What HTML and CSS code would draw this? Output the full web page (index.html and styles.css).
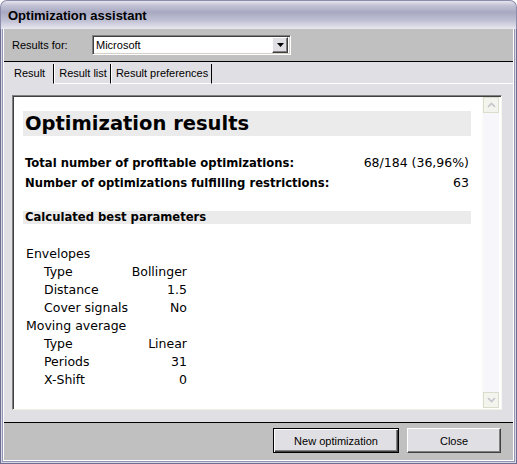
FILE: index.html
```html
<!DOCTYPE html>
<html>
<head>
<meta charset="utf-8">
<link rel="stylesheet" href="styles.css">
</head>
<body>
<div class="window">
  <div class="titlebar"><span class="title">Optimization assistant</span></div>
  <div class="frame">
    <div class="header">
      <span class="label">Results for:</span>
      <div class="combo">
        <span class="combo-text">Microsoft</span>
        <span class="combo-btn"><svg width="7" height="4" viewBox="0 0 7 4"><path d="M0 0h7L3.5 4z" fill="#000"/></svg></span>
      </div>
    </div>
    <div class="tabarea">
      <div class="tabs">
        <div class="tab active">Result</div>
        <div class="tab">Result list</div>
        <div class="tab">Result preferences</div>
        <div class="tabfill"></div>
      </div>
      <div class="panel">
        <div class="view">
          <div class="content">
            <div class="h1">Optimization results</div>
            <div class="stats">
              <div class="stat"><span>Total number of profitable optimizations:</span><span class="val">68/184 (36,96%)</span></div>
              <div class="stat"><span>Number of optimizations fulfilling restrictions:</span><span class="val">63</span></div>
            </div>
            <div class="h2">Calculated best parameters</div>
            <div class="params">
              <div class="group">Envelopes</div>
              <div class="prm"><span>Type</span><span>Bollinger</span></div>
              <div class="prm"><span>Distance</span><span>1.5</span></div>
              <div class="prm"><span>Cover signals</span><span>No</span></div>
              <div class="group">Moving average</div>
              <div class="prm"><span>Type</span><span>Linear</span></div>
              <div class="prm"><span>Periods</span><span>31</span></div>
              <div class="prm"><span>X-Shift</span><span>0</span></div>
            </div>
          </div>
          <div class="scrollbar">
            <div class="sbtn"><svg width="9" height="6" viewBox="0 0 9 6"><path d="M1 5L4.5 1.5L8 5" fill="none" stroke="#c4c4cc" stroke-width="1.6"/></svg></div>
            <div class="track"></div>
            <div class="sbtn"><svg width="9" height="6" viewBox="0 0 9 6"><path d="M1 1L4.5 4.5L8 1" fill="none" stroke="#c4c4cc" stroke-width="1.6"/></svg></div>
          </div>
        </div>
      </div>
    </div>
    <div class="footer">
      <button class="btn default">New optimization</button>
      <button class="btn close">Close</button>
    </div>
  </div>
</div>
</body>
</html>
```
FILE: styles.css
```css
html, body { margin: 0; padding: 0; background: #fff; }
.window { width: 517px; height: 464px; display: flex; flex-direction: column; font-family: "Liberation Sans", Arial, sans-serif; font-size: 11px; color: #000; }
.titlebar { height: 29px; flex: none; box-sizing: border-box; border-radius: 7px 7px 0 0; border: 1px solid #8c8cac; border-bottom: none; background: linear-gradient(#e6e6ee 0%, #c4c4d6 15%, #a8a8c2 40%, #c0c0d4 70%, #e8e8f0 100%); display: flex; align-items: center; padding-left: 7px; }
.title { font-weight: bold; font-size: 13px; color: #000; }
.frame { flex: 1; display: flex; flex-direction: column; border: 1px solid #6e6e90; border-top: none; box-shadow: inset 1px 0 #d8d8e4, inset -1px 0 #d8d8e4, inset 0 -1px #d8d8e4, inset 2px 0 #9494b4, inset -2px 0 #9494b4, inset 0 -2px #9494b4; padding: 0 3px 3px 3px; }
.header { background: #c0c0c0; border-bottom: 1px solid #000; display: flex; align-items: center; padding-left: 8px; box-sizing: border-box; height: 33px; }
.label { width: 80px; }
.combo { width: 199px; height: 20px; box-sizing: border-box; background: #fff; border: 1px solid; border-color: #808080 #fff #fff #808080; box-shadow: inset 1px 1px #404040, inset -1px -1px #d4d0c8; display: flex; align-items: center; padding: 2px 2px 2px 3px; }
.combo-text { flex: 1; font-size: 11px; }
.combo-btn { width: 16px; height: 16px; box-sizing: border-box; background: #e0dfe3; border: 1px solid; border-color: #fff #404040 #404040 #fff; box-shadow: inset -1px -1px #808080; display: flex; align-items: center; justify-content: center; }
.tabarea { flex: 1; background: #e0dfe3; display: flex; flex-direction: column; padding: 2px 0 12px 0; }
.tabs { display: flex; height: 20px; margin-left: 4px; }
.tab { padding: 0 3px 0 4px; line-height: 18px; border-right: 1px solid #000; border-left: 1px solid #fff; border-bottom: 1px solid #fff; height: 19px; }
.tab.active { border-left: none; border-bottom-color: transparent; padding-left: 6px; padding-right: 8px; }
.tabfill { flex: 1; border-bottom: 1px solid #fff; height: 19px; }
.panel { flex: 1; padding: 11px 11px 0 8px; display: flex; }
.view { flex: 1; display: flex; border: 1px solid; border-color: #808080 #f8f8f0 #f0f0e0 #808080; box-shadow: inset 1px 1px #404040; background: #fff; }
.content { flex: 1; padding: 15px 11px 0 10px; font-family: "DejaVu Sans", Verdana, sans-serif; font-size: 12.5px; }
.h1 { background: #ebebeb; height: 25px; line-height: 25px; font-size: 19.5px; font-weight: bold; padding-left: 2px; }
.stats { margin-top: 17px; font-weight: bold; font-size: 11.6px; }
.stat { display: flex; justify-content: space-between; align-items: baseline; line-height: 19px; padding-left: 2px; padding-right: 2px; }
.stat .val { font-weight: normal; font-size: 12.5px; }
.h2 { margin-top: 18px; background: #ebebeb; height: 13px; line-height: 13px; font-weight: bold; font-size: 11.6px; padding-left: 2px; }
.params { margin-top: 21px; width: 161px; padding-left: 3px; }
.group { line-height: 18px; }
.prm { line-height: 18px; display: flex; justify-content: space-between; padding-left: 18px; }
.scrollbar { width: 16px; margin: 1px 2px 1px 0; display: flex; flex-direction: column; background: #f7f7fb; border-left: 1px solid #fbfbf6; }
.sbtn { height: 16px; box-sizing: border-box; border: 1px solid #dcdccc; background: #f4f4ee; display: flex; align-items: center; justify-content: center; }
.track { flex: 1; }
.footer { height: 38px; flex: none; background: #c0c0c0; border-top: 1px solid #000; display: flex; justify-content: flex-end; align-items: flex-start; padding: 5px 12px 0 0; box-sizing: border-box; gap: 8px; }
.btn { height: 25px; box-sizing: border-box; font-family: "Liberation Sans", Arial, sans-serif; font-size: 11px; background: #e0dfe3; border: 1px solid; border-color: #fff #404040 #404040 #fff; box-shadow: inset -1px -1px #808080; padding: 0; margin: 0; color: #000; }
.btn.default { width: 126px; border: 1px solid #000; box-shadow: inset 1px 1px #fff, inset -1px -1px #404040, inset -2px -2px #808080; }
.btn.close { width: 94px; }
```
